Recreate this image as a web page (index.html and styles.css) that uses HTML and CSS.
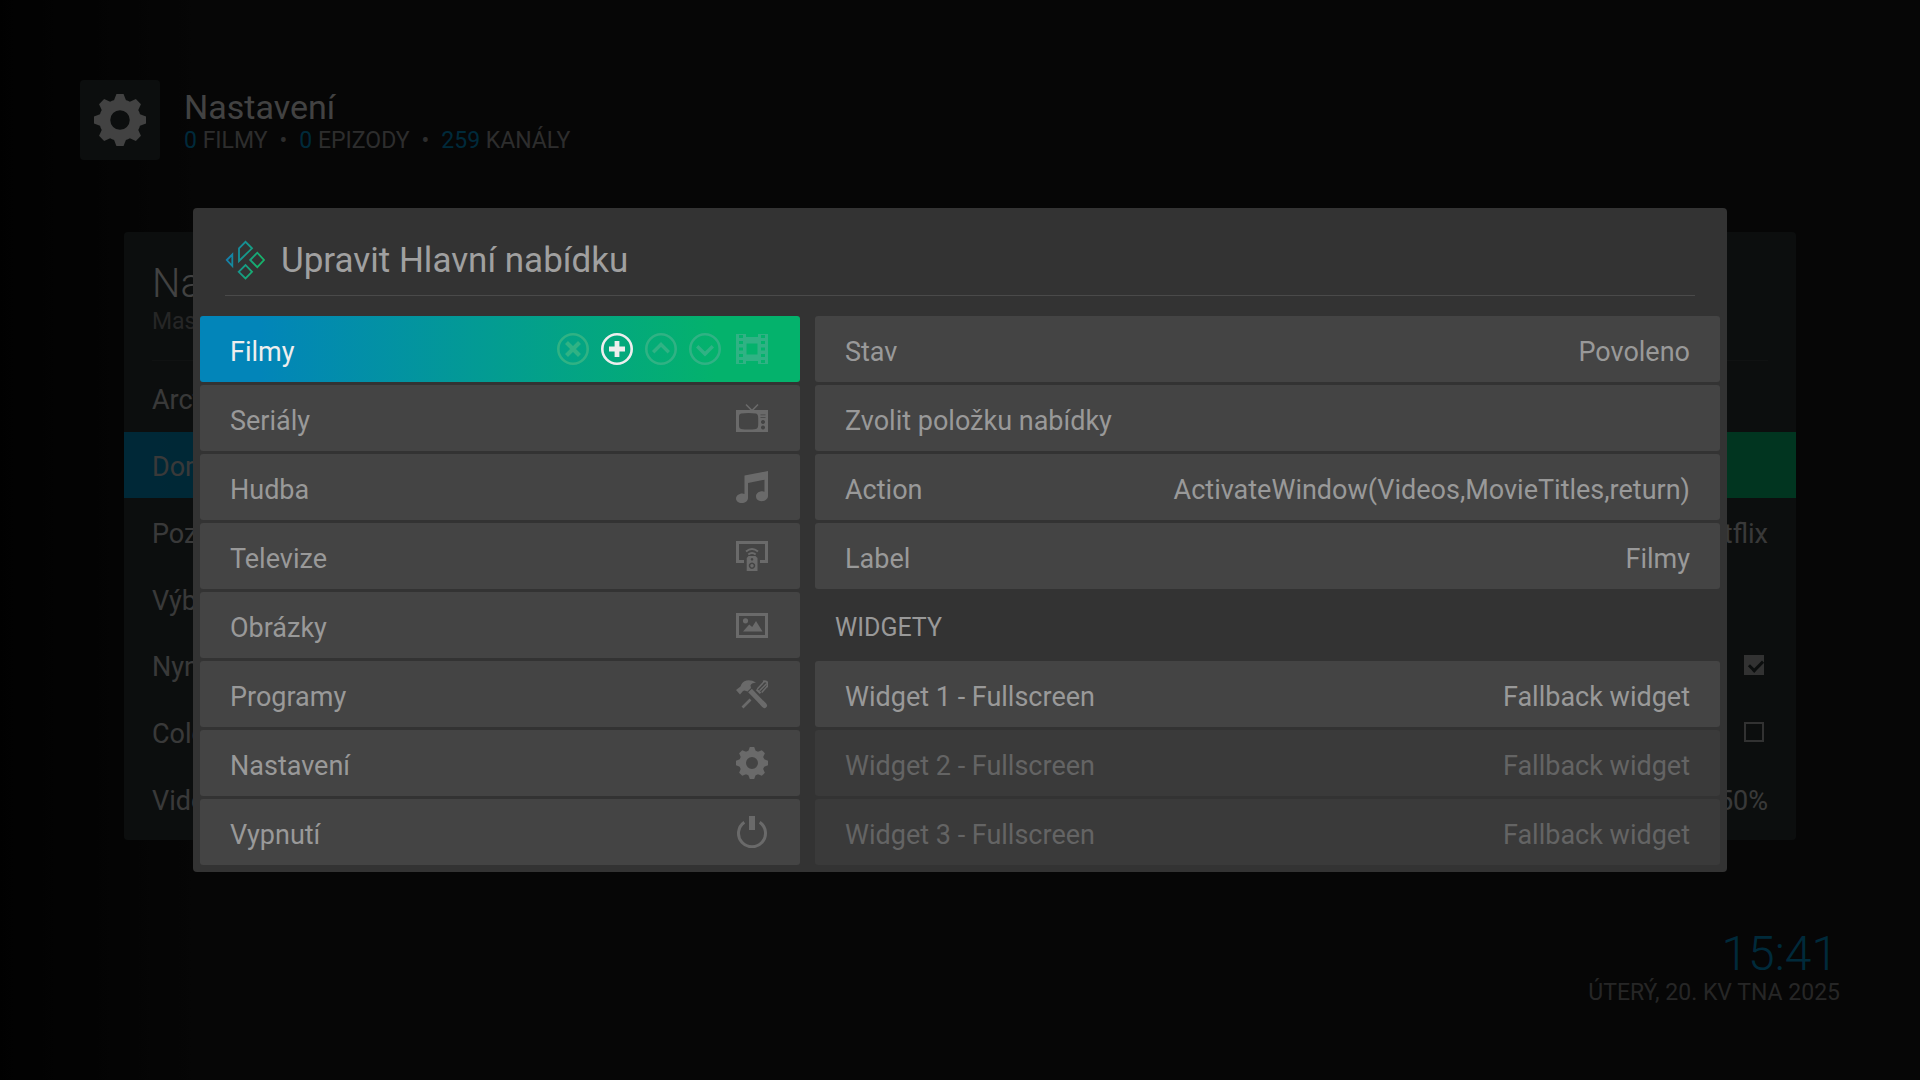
FILE: index.html
```html
<!DOCTYPE html>
<html lang="cs">
<head>
  <meta charset="UTF-8">
  <title>Nastavení</title>
  <meta name="viewport" content="width=device-width, initial-scale=1.0">
  <link rel="stylesheet" href="styles.css">
</head>
<body>
  <svg class="sprite" aria-hidden="true">
    <symbol id="gear" viewBox="0 0 32 32">
      <circle cx="16" cy="16" r="9.4" fill="none" stroke="currentColor" stroke-width="6.8"/>
      <g fill="currentColor">
        <path id="tooth" d="M13.8 0h4.4l1.7 4.5h-7.8z"/>
        <use href="#tooth" transform="rotate(45 16 16)"/>
        <use href="#tooth" transform="rotate(90 16 16)"/>
        <use href="#tooth" transform="rotate(135 16 16)"/>
        <use href="#tooth" transform="rotate(180 16 16)"/>
        <use href="#tooth" transform="rotate(225 16 16)"/>
        <use href="#tooth" transform="rotate(270 16 16)"/>
        <use href="#tooth" transform="rotate(315 16 16)"/>
      </g>
    </symbol>
  </svg>

  <div class="page">
    <header class="top">
      <div class="top-icon"><svg class="icon-large"><use href="#gear"/></svg></div>
      <div class="top-text">
        <h1>Nastavení</h1>
        <p class="stats"><span><b>0</b> FILMY</span><span>•</span><span><b>0</b> EPIZODY</span><span>•</span><span><b>259</b> KANÁLY</span></p>
      </div>
    </header>

    <main class="panel">
      <div class="panel-head">
        <h2>Nastavení</h2>
        <p>Maska</p>
      </div>
      <div class="settings">
        <div class="setting">Arctic</div>
        <div class="setting active">Domů</div>
        <div class="setting"><span>Pozadí</span><span>Netflix</span></div>
        <div class="setting">Výběr</div>
        <div class="setting"><label for="now">Nyní</label><input type="checkbox" id="now" checked></div>
        <div class="setting"><label for="color">Color</label><input type="checkbox" id="color"></div>
        <div class="setting"><span>Video</span><span>50%</span></div>
      </div>
    </main>

    <footer class="clock">
      <div class="time">15:41</div>
      <div class="date">ÚTERÝ, 20. KV TNA 2025</div>
    </footer>
  </div>

  <div class="overlay">
    <div class="modal" role="dialog" aria-labelledby="modalTitle">
      <div class="modal-head">
        <svg class="logo" viewBox="0 0 40 40">
          <defs>
            <linearGradient id="logoFill" gradientUnits="userSpaceOnUse" x1="0" y1="12" x2="34" y2="24">
              <stop offset="0" stop-color="#1478b4"/>
              <stop offset="1" stop-color="#17b26b"/>
            </linearGradient>
          </defs>
          <g fill="none" stroke="url(#logoFill)" stroke-width="1.8">
            <path d="M1.8 20 7.3 14.5V26z"/>
            <path d="M14 21V8.3L20.5 1.8 27 8.3z"/>
            <path d="M25.2 20 32.3 12.7 39 20 32.3 27.2z"/>
            <path d="M13.7 31.8 20.5 25 27 31.8 20.5 38.5z"/>
          </g>
        </svg>
        <h2 id="modalTitle">Upravit Hlavní nabídku</h2>
      </div>

      <div class="columns">
        <ul class="menu">
          <li class="row selected">
            <button class="name">Filmy</button>
            <div class="actions">
              <button class="action" aria-label="Odebrat">
                <svg class="icon" viewBox="0 0 32 32" fill="none" stroke="currentColor"><circle cx="16" cy="16" r="14.7" stroke-width="2.6"/><path d="M9.5 9.500l13 13M22.500 9.500l-13 13" stroke-width="4.2"/></svg>
              </button>
              <button class="action on" aria-label="Přidat">
                <svg class="icon" viewBox="0 0 32 32" fill="none" stroke="currentColor"><circle cx="16" cy="16" r="14.7" stroke-width="2.6"/><path d="M16 8v16M8 16h16" stroke-width="4.8"/></svg>
              </button>
              <button class="action" aria-label="Nahoru">
                <svg class="icon" viewBox="0 0 32 32" fill="none" stroke="currentColor"><circle cx="16" cy="16" r="14.7" stroke-width="2.6"/><path d="M8.2 19.3 16 11.5l7.8 7.8" stroke-width="3.4"/></svg>
              </button>
              <button class="action" aria-label="Dolů">
                <svg class="icon" viewBox="0 0 32 32" fill="none" stroke="currentColor"><circle cx="16" cy="16" r="14.7" stroke-width="2.6"/><path d="M8.2 13.2 16 21l7.8-7.8" stroke-width="3.4"/></svg>
              </button>
            </div>
            <svg class="icon" viewBox="0 0 32 32"><path fill="currentColor" fill-rule="evenodd" d="M0 1h10v3h12V1h10v30H22v-3H10v3H0zM10.500 10.500v11h11v-11zM3 2v3h4V2zM3 8v3h4V8zM3 14.500v3h4v-3zM3 21v3h4v-3zM3 27v3h4v-3zM25 2v3h4V2zM25 8v3h4V8zM25 14.500v3h4v-3zM25 21v3h4v-3zM25 27v3h4v-3z"/></svg>
          </li>
          <li class="row">
            <button class="name">Seriály</button>
            <svg class="icon" viewBox="0 0 32 32"><path d="M10 2.500l6 6 6-6" fill="none" stroke="currentColor" stroke-width="1.6"/><path fill="currentColor" fill-rule="evenodd" d="M0 8h32v22H0zM5 11.500Q3 12 3 14v10q0 2.500 2 3 7.500 1 15 0 2-.5 2.200-4v-7q0-4-2.200-4.500-7.500-1-15 0zM24.500 12.500v.8h5v-.8zM24.500 15v.8h5V15zM27 18a2 2 0 1 0 .01 0zM27 23.500a2 2 0 1 0 .01 0z"/></svg>
          </li>
          <li class="row">
            <button class="name">Hudba</button>
            <svg class="icon" viewBox="0 0 32 32"><path fill="currentColor" d="M8.500 4.500 32 0v25c0 3-3 5.200-6.500 5.200S20 28 20 25.300s2.700-5 6.300-5q1.500 0 2.200.4V8.700L12 12v15c0 3-3 5-6.300 5S0 30 0 27.500s2.700-5 6.300-5q1.500 0 2.200.4z"/></svg>
          </li>
          <li class="row">
            <button class="name">Televize</button>
            <svg class="icon" viewBox="0 0 32 32"><g fill="none" stroke="currentColor"><path d="M8 21.500H1.500v-19h29v19H24" stroke-width="3"/><path d="M10 11.500q6-5 12 0M12.300 14.500q3.700-3.200 7.400 0" stroke-width="1.900"/></g><path fill="currentColor" fill-rule="evenodd" d="M12.500 16h7l2 2v13H10.700V18zM16 18a1.300 1.300 0 1 0 .01 0zM16 22.500a3.200 3.200 0 1 0 .01 0zM16 24a1.700 1.700 0 1 1-.01 0z"/></svg>
          </li>
          <li class="row">
            <button class="name">Obrázky</button>
            <svg class="icon" viewBox="0 0 32 32"><path d="M1.500 5.500h29v22h-29z" fill="none" stroke="currentColor" stroke-width="3"/><g fill="currentColor"><circle cx="9.500" cy="11.800" r="2.600"/><path d="M7 22.500l6.200-7 3 2.500 3.800-6 6.500 10.500z"/></g></svg>
          </li>
          <li class="row">
            <button class="name">Programy</button>
            <svg class="icon" viewBox="0 0 32 32"><path fill="currentColor" d="M0 12l4.500-3.500Q6 3.500 10.500 2.500t9.500 2q-5 .5-5.500 3l.5 2.500-3.500 3.500-3-1-1.500.500-3 3.500z"/><g fill="none" stroke="currentColor"><path d="M14 12.500 28.500 27.500" stroke-width="5"/><path d="M27 26l1.500 1.500" stroke-width="5" stroke-linecap="round"/><path d="M14.500 21.500 6.500 29.500" stroke-width="2.600"/><path d="M21.300 11 28.300 3.500M23.500 12.700 30.800 5.500M25.700 14.500 31.500 8" stroke-width="1.500"/><path d="M27 3.500q3.500-1 4.500 1.500.8 2-.5 4" stroke-width="2"/><path d="M20.500 11.500 24.500 15.300" stroke-width="2"/></g></svg>
          </li>
          <li class="row">
            <button class="name">Nastavení</button>
            <svg class="icon"><use href="#gear"/></svg>
          </li>
          <li class="row">
            <button class="name">Vypnutí</button>
            <svg class="icon" viewBox="0 0 32 32"><path d="M8.300 6.200a13.500 13.500 0 1 0 15.400 0" fill="none" stroke="currentColor" stroke-width="3"/><path d="M13 0h6v14h-6z" fill="currentColor"/></svg>
          </li>
        </ul>

        <div class="options">
          <button class="row"><span>Stav</span><span>Povoleno</span></button>
          <button class="row"><span>Zvolit položku nabídky</span></button>
          <button class="row"><span>Action</span><span>ActivateWindow(Videos,MovieTitles,return)</span></button>
          <button class="row"><span>Label</span><span>Filmy</span></button>
          <h3>WIDGETY</h3>
          <button class="row"><span>Widget 1 - Fullscreen</span><span>Fallback widget</span></button>
          <button class="row" disabled><span>Widget 2 - Fullscreen</span><span>Fallback widget</span></button>
          <button class="row" disabled><span>Widget 3 - Fullscreen</span><span>Fallback widget</span></button>
        </div>
      </div>
    </div>
  </div>
</body>
</html>
```

FILE: styles.css
```css
* {
  box-sizing: border-box;
}
body {
  margin: 0;
  font-family: Roboto, "Liberation Sans", sans-serif;
  font-size: 27px;
  line-height: 32px;
  color: #dcdcdc;
  background: linear-gradient(to right, #060606, #141414 10%, #141515 30%, #141414);
}
h1, h2, h3, p, ul {
  margin: 0;
  padding: 0;
  font-weight: 400;
}
button {
  font: inherit;
  color: inherit;
  background: none;
  border: none;
  padding: 0;
  cursor: pointer;
}
.sprite {
  position: absolute;
  width: 0;
  height: 0;
}

/* page behind the dialog */
.page {
  min-height: 100vh;
  display: flex;
  flex-direction: column;
  padding: 80px 80px 72px;
}
.top {
  display: flex;
  align-items: center;
  gap: 24px;
  margin-bottom: 72px;
}
.top-icon {
  display: flex;
  align-items: center;
  justify-content: center;
  width: 80px;
  height: 80px;
  border-radius: 4px;
  background-color: #28302f;
}
.top-text {
  padding-top: 4px;
}
.icon-large {
  width: 52px;
  height: 52px;
}
h1 {
  font-size: 34px;
  line-height: 38px;
}
.stats {
  display: flex;
  gap: 12px;
  font-size: 23px;
  line-height: 30px;
  color: #989898;
}
.stats b {
  font-weight: 400;
  color: #028cc4;
}
.panel {
  flex: 1;
  display: flex;
  flex-direction: column;
  margin: 0 44px;
  padding-bottom: 8px;
  border-radius: 4px;
  background-color: #283130;
}
.panel-head {
  height: 129px;
  margin: 0 28px 4px;
  padding-top: 30px;
  border-bottom: 1px solid #383d3c;
}
.panel-head h2 {
  font-size: 40px;
  font-weight: 300;
  line-height: 44px;
}
.panel-head p {
  font-size: 23px;
  color: #808080;
}
.settings {
  flex: 1;
  display: flex;
  flex-direction: column;
}
.setting {
  flex: 1;
  display: flex;
  align-items: center;
  justify-content: space-between;
  padding: 4px 28px 0;
  color: #c0c0c0;
}
.setting.active {
  background: linear-gradient(to right, #0285b9, #04b26c 75%);
}
.setting input {
  appearance: none;
  width: 20px;
  height: 20px;
  margin: 0 4px 4px 0;
  border: 2px solid #a8a8a8;
}
.setting input:checked {
  background-color: #a8a8a8;
}
.setting input:checked::before {
  content: "";
  display: block;
  width: 11px;
  height: 6px;
  margin: 3px 0 0 3px;
  border-left: 3px solid #283130;
  border-bottom: 3px solid #283130;
  transform: rotate(-45deg);
}
.clock {
  padding: 90px 0 0;
  text-align: right;
}
.time {
  padding-right: 2px;
  font-size: 48px;
  font-weight: 300;
  line-height: 48px;
  color: #028cc4;
}
.date {
  font-size: 23px;
  line-height: 30px;
  color: #808080;
}

/* dialog */
.overlay {
  position: fixed;
  inset: 0;
  display: flex;
  align-items: center;
  padding: 0 193px;
  background-color: rgba(0, 0, 0, 0.7);
}
.modal {
  flex: 1;
  padding: 7px;
  border-radius: 4px;
  background-color: #333;
  color: #999;
}
.modal-head {
  display: flex;
  align-items: center;
  gap: 16px;
  height: 81px;
  margin: 0 25px 20px;
  padding-top: 10px;
  border-bottom: 1px solid #4a4a4a;
}
.modal-head h2 {
  padding-top: 2px;
  font-size: 35px;
  line-height: 44px;
  color: #a0a0a0;
}
.logo {
  width: 40px;
  height: 40px;
}
.columns {
  display: grid;
  grid-template-columns: 600fr 905fr;
  gap: 15px;
}
.menu,
.options {
  display: flex;
  flex-direction: column;
  gap: 3px;
}
.row {
  display: flex;
  align-items: center;
  justify-content: space-between;
  height: 66px;
  padding: 0 30px;
  border-radius: 3px;
  background-color: #444;
}
.menu .row {
  padding-right: 32px;
}
.row span,
.name {
  padding-top: 6px;
}
.name {
  flex: 1;
  text-align: left;
}
.row:disabled {
  background-color: #3a3a3a;
  color: #646464;
}
.row.selected {
  background: linear-gradient(to right, #0285b9, #0285b9 10%, #04b26c 86%);
}
.selected .name {
  color: #eee;
}
.icon {
  display: block;
  width: 32px;
  height: 32px;
  color: #6a6a6a;
}
.actions {
  display: flex;
  gap: 12px;
  margin-right: 15px;
}
.selected .icon {
  color: #30b284;
}
.selected .action.on .icon {
  color: #eee;
}
.options h3 {
  height: 66px;
  padding: 20px 20px 0;
  font-size: 25px;
}
```
